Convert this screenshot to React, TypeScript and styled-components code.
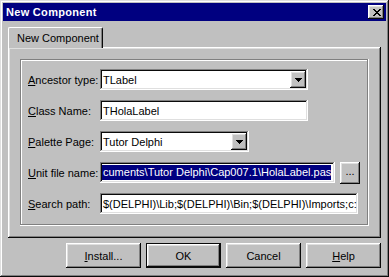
import React from "react";
import styled, { createGlobalStyle } from "styled-components";

const GlobalStyle = createGlobalStyle`
  html, body {
    margin: 0;
    padding: 0;
    background: #c0c0c0;
  }
  body {
    font-family: "Liberation Sans", Arial, sans-serif;
    font-size: 11px;
    color: #000;
  }
`;

const raised = `
  box-shadow: inset -1px -1px #0a0a0a, inset 1px 1px #ffffff,
    inset -2px -2px #808080, inset 2px 2px #dfdfdf;
`;

const sunken = `
  box-shadow: inset -1px -1px #ffffff, inset 1px 1px #808080,
    inset -2px -2px #dfdfdf, inset 2px 2px #0a0a0a;
`;

const Window = styled.div`
  width: 389px;
  height: 277px;
  box-sizing: border-box;
  padding: 3px;
  background: #c0c0c0;
  box-shadow: inset -1px -1px #0a0a0a, inset 1px 1px #dfdfdf,
    inset -2px -2px #808080, inset 2px 2px #ffffff;
  display: flex;
  flex-direction: column;
`;

const TitleBar = styled.div`
  height: 18px;
  background: #000080;
  display: flex;
  align-items: center;
  justify-content: space-between;
  padding: 0 2px 0 3px;
`;

const Title = styled.span`
  color: #fff;
  font-weight: bold;
  font-size: 11px;
  letter-spacing: 0.3px;
`;

const CloseButton = styled.div`
  width: 16px;
  height: 14px;
  background: #c0c0c0;
  ${raised}
  display: flex;
  align-items: center;
  justify-content: center;
  padding-left: 1px;
  box-sizing: border-box;
`;

const Body = styled.div`
  padding: 6px 5px 0 5px;
  display: flex;
  flex-direction: column;
`;

const TabStrip = styled.div`
  display: flex;
  height: 21px;
  margin-bottom: -1px;
  position: relative;
  z-index: 1;
`;

const Tab = styled.div`
  width: 95px;
  height: 21px;
  box-sizing: border-box;
  background: #c0c0c0;
  border-left: 1px solid #fff;
  border-top: 1px solid #fff;
  border-right: 1px solid #0a0a0a;
  border-top-left-radius: 2px;
  border-top-right-radius: 2px;
  box-shadow: inset -1px 0 #808080;
  display: flex;
  align-items: center;
  padding: 0 0 1px 8px;
`;

const Panel = styled.div`
  height: 191px;
  box-sizing: border-box;
  padding: 12px 12px 12px 12px;
  background: #c0c0c0;
  ${raised}
  display: flex;
  flex-direction: column;
`;

const Group = styled.div`
  flex: 1;
  padding: 10px 8px 0 8px;
  box-shadow: inset -1px -1px #ffffff, inset 1px 1px #808080,
    inset -2px -2px #808080, inset 2px 2px #ffffff;
  display: flex;
  flex-direction: column;
  gap: 10px;
`;

const Row = styled.div`
  height: 21px;
  display: flex;
  align-items: center;
`;

const Label = styled.label`
  width: 72px;
  flex-shrink: 0;
  white-space: nowrap;
`;

const Field = styled.div<{ $w: number }>`
  width: ${(p) => p.$w}px;
  height: 21px;
  box-sizing: border-box;
  background: #fff;
  ${sunken}
  padding: 2px 2px 2px 2px;
  display: flex;
  align-items: center;
  overflow: hidden;
  white-space: nowrap;
  position: relative;
`;

const FieldText = styled.span`
  padding-left: 1px;
`;

const Selected = styled.span`
  background: #000080;
  color: #fff;
  line-height: 15px;
  padding-left: 1px;
`;

const DropButton = styled.div`
  margin-left: auto;
  width: 16px;
  height: 17px;
  flex-shrink: 0;
  background: #c0c0c0;
  ${raised}
  display: flex;
  align-items: center;
  justify-content: center;
`;

const SmallButton = styled.div`
  width: 20px;
  height: 22px;
  margin-left: 5px;
  box-sizing: border-box;
  background: #c0c0c0;
  ${raised}
  display: flex;
  align-items: center;
  justify-content: center;
  padding-bottom: 3px;
`;

const ButtonRow = styled.div`
  display: flex;
  justify-content: flex-end;
  gap: 5px;
  margin-top: 5px;
  padding-right: 0;
`;

const Button = styled.div<{ $default?: boolean }>`
  width: 75px;
  height: 25px;
  box-sizing: border-box;
  background: #c0c0c0;
  display: flex;
  align-items: center;
  justify-content: center;
  ${(p) =>
    p.$default
      ? `box-shadow: inset 0 0 0 1px #0a0a0a, inset -2px -2px #0a0a0a, inset 2px 2px #ffffff,
    inset -3px -3px #808080, inset 3px 3px #dfdfdf;`
      : raised}
`;

const Arrow = () => (
  <svg width="7" height="4" viewBox="0 0 7 4" shapeRendering="crispEdges">
    <path d="M0 0h7v1H0z M1 1h5v1H1z M2 2h3v1H2z M3 3h1v1H3z" fill="#000" />
  </svg>
);

const CloseX = () => (
  <svg width="8" height="7" viewBox="0 0 8 7" shapeRendering="crispEdges">
    <path
      d="M0 0h2v1H0z M6 0h2v1H6z M1 1h2v1H1z M5 1h2v1H5z M2 2h4v1H2z M3 3h2v1H3z M2 4h4v1H2z M1 5h2v1H1z M5 5h2v1H5z M0 6h2v1H0z M6 6h2v1H6z"
      fill="#000"
    />
  </svg>
);

const App: React.FC = () => {
  return (
    <>
      <GlobalStyle />
      <Window>
        <TitleBar>
          <Title>New Component</Title>
          <CloseButton>
            <CloseX />
          </CloseButton>
        </TitleBar>
        <Body>
          <TabStrip>
            <Tab>New Component</Tab>
          </TabStrip>
          <Panel>
            <Group>
              <Row>
                <Label>
                  <u>A</u>ncestor type:
                </Label>
                <Field $w={208}>
                  <FieldText>TLabel</FieldText>
                  <DropButton>
                    <Arrow />
                  </DropButton>
                </Field>
              </Row>
              <Row>
                <Label>
                  <u>C</u>lass Name:
                </Label>
                <Field $w={208}>
                  <FieldText>THolaLabel</FieldText>
                </Field>
              </Row>
              <Row>
                <Label>
                  <u>P</u>alette Page:
                </Label>
                <Field $w={149}>
                  <FieldText>Tutor Delphi</FieldText>
                  <DropButton>
                    <Arrow />
                  </DropButton>
                </Field>
              </Row>
              <Row>
                <Label>
                  <u>U</u>nit file name:
                </Label>
                <Field $w={235}>
                  <Selected>cuments\Tutor Delphi\Cap007.1\HolaLabel.pas</Selected>
                </Field>
                <SmallButton>...</SmallButton>
              </Row>
              <Row>
                <Label>
                  <u>S</u>earch path:
                </Label>
                <Field $w={258}>
                  <FieldText>$(DELPHI)\Lib;$(DELPHI)\Bin;$(DELPHI)\Imports;c:</FieldText>
                </Field>
              </Row>
            </Group>
          </Panel>
          <ButtonRow>
            <Button>
              <span>
                <u>I</u>nstall...
              </span>
            </Button>
            <Button $default>OK</Button>
            <Button>Cancel</Button>
            <Button>
              <span>
                <u>H</u>elp
              </span>
            </Button>
          </ButtonRow>
        </Body>
      </Window>
    </>
  );
};

export default App;
